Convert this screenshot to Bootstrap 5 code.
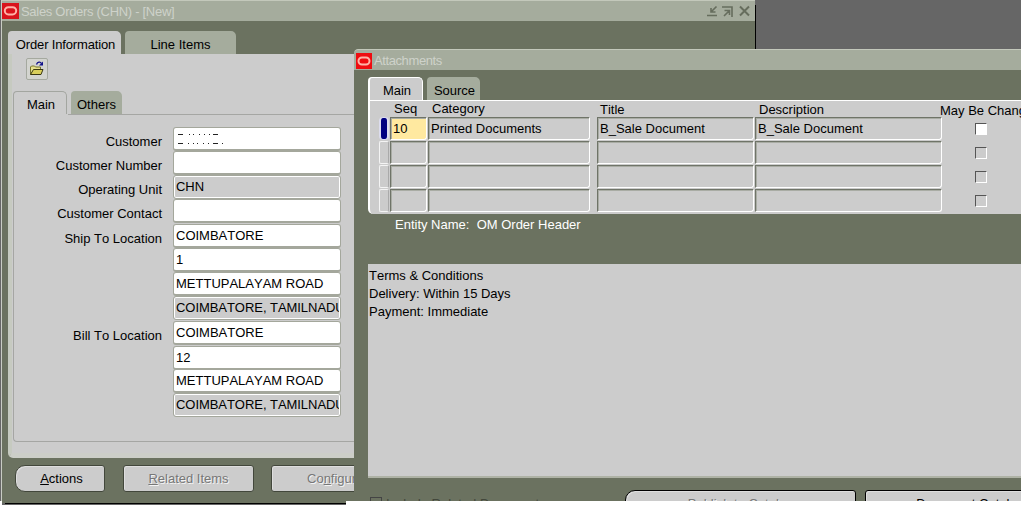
<!DOCTYPE html>
<html lang="en">
<head>
<meta charset="utf-8">
<title>Sales Orders (CHN) - [New]</title>
<meta name="viewport" content="width=device-width, initial-scale=1">
<link href="https://cdn.jsdelivr.net/npm/bootstrap@5.3.0/dist/css/bootstrap.min.css" rel="stylesheet">
<style>
body{font:13px/18px "Liberation Sans",Arial,sans-serif;font-kerning:none;color:#000;background:#fff;height:505px;white-space:nowrap}
.desktop{height:505px;background:#666}
.win{background:#6b7260}
.orders{left:1px;top:0;width:754px;height:503px;border-left:1px solid #c9ccc4}
.attach{left:354px;top:49px;width:667px;height:452px;border-top-left-radius:4px}
.bar{height:21px;background:#a5ac9d;border-top:1px solid #c3c8bb;color:#ced2ca}
.attach .bar{border-top-left-radius:4px}
.logo{width:16px;height:16px;flex:none}
.tabs{gap:4px;height:23px}
.tb{border-radius:4px 5px 0 0;background:#a5ac9d;height:23px;text-align:center;flex:none}
.tb.on{background:#ccc;padding-left:2px}
.sheet{background:#ccc}
.outer{width:346px;height:404px;border-left:4px solid #c6cac0;border-bottom:5px solid #cccec8;border-bottom-left-radius:5px}
.ico{width:22px;height:22px;border:1px solid #a5a99f;border-radius:2px;background:#d3d4cf;margin:4px 0 0 14px}
.inner-tabs{margin:11px 0 0 1px}
.inner-tabs .on{border:1px solid #a3a6a0;border-bottom:0}
.inner{margin-left:1px;height:328px;border:1px solid #a5a6a3;border-top:0;border-right:0;border-bottom-left-radius:4px;width:341px;padding-top:13px;background:linear-gradient(#a5a6a3,#a5a6a3) 54px 0/291px 1px no-repeat}
.lab{width:148px;text-align:right;padding-top:6px;flex:none}
.fld{width:168px;margin-left:11px;height:24px;border:1px solid #a4a79c;border-bottom-width:2px;border-radius:3px;background:#fff;overflow:hidden;padding:1px 2px 0;line-height:20px;flex:none}
.fld.ro{background:#ccc;border-width:1px;box-shadow:inset 0 0 0 1px #fff;padding:1px 1px 0 2px;line-height:20px}
.fld span{display:block;overflow:hidden;letter-spacing:-.05px}
.cell-row{height:24px}
.gap1{height:25px}
.key{height:27px;border:1px solid #42473b;border-radius:3px;background:#ccc;text-align:center;line-height:25px;flex:none;box-shadow:inset 1px 1px #dedede}
.off{color:#777;text-shadow:1px 1px #f4f4f4}
.round-l{border-radius:10px 3px 3px 10px}
.grid-panel{margin-left:14px;height:114px;border-top:1px solid #fff;border-left:2px solid #fff;border-bottom-left-radius:5px;width:653px}
.attach .tb.on{border:solid #fff;border-width:1px 1px 0 2px}
.heads{height:16px;line-height:16px}
.heads>div{flex:none}
.g{height:23px;border:1px solid #fff;border-top-color:#6f7468;border-left-color:#6f7468;box-shadow:inset 0 1px #a9aca4,inset 1px 0 #a9aca4;border-bottom-right-radius:3px;line-height:21px;padding-left:2px;flex:none}
.ind{width:10px;height:23px;border:1px solid #f4f4f4;border-right-color:#aaa;border-radius:2px;margin-right:1px;flex:none}
.ind.cur{background:#000080;border-color:#dde;border-width:1px 2px 1px 2px;border-radius:4px}
.s{width:37px;margin-right:1px}.c{width:162px;margin-right:1px}.t{width:157px;margin:0 1px 0 6px}.d{width:187px;margin-right:1px}
.chk{width:12px;height:12px;border:1px solid #fff;border-top-color:#555;border-left-color:#555;margin:6px 0 0 32px;flex:none}
.terms{margin:0 0 0 14px;width:653px;height:214px;border-bottom:2px solid #aeb2a5;background:#ccc;padding:3px 0 0 1px}
.foot{height:12px;overflow:hidden}
.foot>div{flex:none}
.strip{left:346px;top:501px;right:0;height:4px;background:#fff}
</style>
</head>
<body>
<div class="desktop position-relative overflow-hidden">
  <section class="win orders position-absolute d-flex flex-column overflow-hidden">
    <header class="bar d-flex align-items-center flex-shrink-0">
      <svg class="logo" style="width:17px" viewBox="0 0 17 16"><path fill="#d9141c" d="M0 0h17v16H0z"/><rect x="2.8" y="4.2" width="11.4" height="7.2" rx="3.6" fill="none" stroke="#ffb3a8" stroke-width="2"/></svg>
      <span style="margin-left:2px;padding-top:2px;letter-spacing:-.3px">Sales Orders (CHN) - [New]</span>
      <svg class="ms-auto" width="46" height="14" style="margin-right:3px" viewBox="0 0 46 14" fill="none" stroke="#666d5d" stroke-width="1.600"><path d="M10.500 2.500 5.500 7.500M5 4v4h4.500M1 11.500h10"/><path d="M16 3h10v10M18 12l5-5M18.500 6.500h5V11"/><path stroke-width="2" d="m34 2.500 9 9m0-9-9 9"/></svg>
    </header>
    <div class="d-flex tabs flex-shrink-0" style="margin:10px 0 0 6px">
      <div class="tb on" style="width:113px;line-height:27px;letter-spacing:-.15px">Order Information</div>
      <div class="tb" style="width:111px;line-height:27px">Line Items</div>
    </div>
    <div class="sheet outer flex-shrink-0" style="margin-left:6px">
      <div class="ico d-flex"><svg width="20" height="20" viewBox="0 0 20 20" stroke-linejoin="round"><path d="M3.500 15.500V8l1-1h3l1 1h5v3" fill="#e5e08a" stroke="#77742a"/><path d="m3.500 15.500 3-5h9.500l-2 5z" fill="#d9cf5a" stroke="#3a3812"/><path d="M9.500 5.500c1-3 4-3 5-1" fill="none" stroke="#10108a" stroke-width="1.300"/><path d="M12 6.500h4V2.500z" fill="#10108a"/></svg></div>
      <div class="d-flex tabs inner-tabs">
        <div class="tb on" style="width:54px;line-height:26px">Main</div>
        <div class="tb" style="width:51px;line-height:27px">Others</div>
      </div>
      <div class="inner">
        <div class="d-flex cell-row"><div class="lab">Customer</div><div class="fld"><svg class="d-block" width="60" height="18" viewBox="0 0 60 18" stroke="#222"><path d="M2 5.500h5M13 5.500h1M17 5.500h1M23 5.500h1M28 5.500h1M33 5.500h1M37 5.500h5M2 14.500h5M12 14.500h1M17 14.500h1M21 14.500h1M27 14.500h1M32 14.500h1M37 14.500h5M46 14.500h1"/></svg></div></div>
        <div class="d-flex cell-row"><div class="lab">Customer Number</div><div class="fld"></div></div>
        <div class="d-flex cell-row"><div class="lab">Operating Unit</div><div class="fld ro"><span>CHN</span></div></div>
        <div class="d-flex gap1"><div class="lab">Customer Contact</div><div class="fld"></div></div>
        <div class="d-flex cell-row"><div class="lab">Ship To Location</div><div class="fld">COIMBATORE</div></div>
        <div class="d-flex cell-row"><div class="lab"></div><div class="fld">1</div></div>
        <div class="d-flex cell-row"><div class="lab"></div><div class="fld">METTUPALAYAM ROAD</div></div>
        <div class="d-flex gap1"><div class="lab"></div><div class="fld ro"><span>COIMBATORE, TAMILNADU</span></div></div>
        <div class="d-flex gap1"><div class="lab">Bill To Location</div><div class="fld">COIMBATORE</div></div>
        <div class="d-flex" style="height:23px"><div class="lab"></div><div class="fld">12</div></div>
        <div class="d-flex cell-row"><div class="lab"></div><div class="fld">METTUPALAYAM ROAD</div></div>
        <div class="d-flex cell-row"><div class="lab"></div><div class="fld ro"><span>COIMBATORE, TAMILNADU</span></div></div>
      </div>
    </div>
    <div class="d-flex" style="margin:7px 0 0 13px">
      <div class="key round-l" style="width:90px;padding-left:3px">
        <u>A</u>ctions</div>
      <div class="key off" style="width:131px;margin-left:18px"><u>R</u>elated Items</div>
      <div class="key off text-start" style="width:131px;margin-left:17px;padding-left:35px">Co<u>n</u>figurator</div>
    </div>
  </section>
  <div class="position-absolute bg-black" style="left:755px;top:5px;width:1px;height:44px"></div>
  <div class="position-absolute bg-black" style="left:5px;top:503px;width:341px;height:1px"></div>
  <div class="position-absolute bg-white" style="left:0;top:501px;width:2px;height:4px"></div>

  <section class="win attach position-absolute d-flex flex-column overflow-hidden">
    <header class="bar d-flex align-items-center flex-shrink-0">
      <svg class="logo" style="margin:2px 2px 0 2px" viewBox="0 0 16 16"><path fill="#ef0c10" d="M0 0h16v16H0z"/><rect x="2.500" y="4.500" width="11" height="7" rx="3.500" fill="none" stroke="#ffb3a8" stroke-width="2"/></svg>
      <span style="padding-top:2px;letter-spacing:-.4px">Attachments</span>
    </header>
    <div class="d-flex tabs flex-shrink-0" style="margin:7px 0 0 14px">
      <div class="tb on" style="width:55px;line-height:25px">Main</div>
      <div class="tb" style="width:53px;line-height:27px;padding-left:2px">Source</div>
    </div>
    <div class="sheet grid-panel flex-shrink-0">
      <div class="d-flex heads"><div style="width:62px;padding-left:24px">Seq</div><div style="width:168px">Category</div><div style="width:159px;padding-top:1px">Title</div><div style="width:181px;padding-top:1px">Description</div><div style="padding-top:2px">May Be Changed</div></div>
      <div class="d-flex cell-row" style="margin-left:9px"><div class="ind cur"></div><div class="g s" style="background:#ffe9a0">10</div><div class="g c">Printed Documents</div><div class="g t">B_Sale Document</div><div class="g d">B_Sale Document</div><div class="chk bg-white"></div></div>
      <div class="d-flex cell-row" style="margin-left:9px"><div class="ind"></div><div class="g s"></div><div class="g c"></div><div class="g t"></div><div class="g d"></div><div class="chk"></div></div>
      <div class="d-flex cell-row" style="margin-left:9px"><div class="ind"></div><div class="g s"></div><div class="g c"></div><div class="g t"></div><div class="g d"></div><div class="chk"></div></div>
      <div class="d-flex cell-row" style="margin-left:9px"><div class="ind"></div><div class="g s"></div><div class="g c"></div><div class="g t"></div><div class="g d"></div><div class="chk"></div></div>
    </div>
    <div class="text-white flex-shrink-0" style="height:50px;padding:2px 0 0 41px">Entity Name:&nbsp; OM Order Header</div>
    <div class="terms flex-shrink-0">Terms &amp; Conditions<br>Delivery: Within 15 Days<br>Payment: Immediate</div>
    <div class="d-flex foot" style="margin-top:12px">
      <div style="width:12px;height:12px;border:1px solid #444;margin:7px 0 0 16px"></div>
      <div style="width:243px;margin:6px 0 0 0;padding-left:4px;line-height:16px;color:#42473b">Include Related Documents</div>
      <div class="key off" style="width:231px;border-color:#000;border-top-left-radius:10px">Publish to Catalog</div>
      <div class="key" style="width:210px;border-color:#000;margin-left:9px">Document Catalog</div>
    </div>
  </section>
  <div class="strip position-absolute"></div>
</div>
<script src="https://cdn.jsdelivr.net/npm/bootstrap@5.3.0/dist/js/bootstrap.bundle.min.js"></script>
</body>
</html>
